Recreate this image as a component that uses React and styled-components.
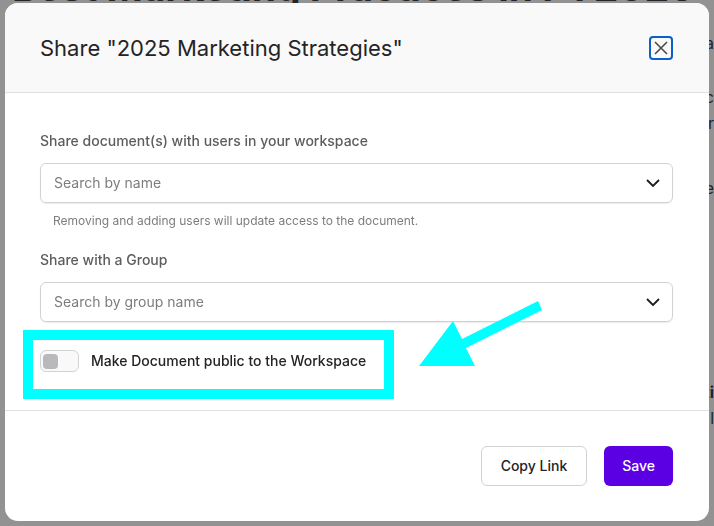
import React, { useState } from "react";
import styled, { createGlobalStyle } from "styled-components";

const cyan = "#00ffff";
const borderColor = "#d2d2d4";

const GlobalStyle = createGlobalStyle`
  * {
    box-sizing: border-box;
  }

  body {
    margin: 0;
    overflow: hidden;
    background: #929292;
    color: #242426;
    font-family: Inter, "Liberation Sans", sans-serif;
    font-size: 14px;
    line-height: 20px;
    -webkit-font-smoothing: antialiased;
  }

  button,
  input {
    font: inherit;
  }
`;

/* the document under the dialog, scrolled part of the way down */
const Page = styled.div`
  height: 100vh;
  overflow: hidden;
`;

const PageTitle = styled.h1`
  margin: -43px 0 0;
  padding-left: 12px;
  font-size: 39px;
  line-height: 60px;
  font-weight: 700;
  white-space: nowrap;
`;

const PageText = styled.p`
  display: flex;
  justify-content: flex-end;
  margin: ${({ $space }) => $space}px 0 0;
  font-size: 16px;
  line-height: 26px;
  font-weight: ${({ $bold }) => ($bold ? 700 : 400)};
`;

const Overlay = styled.div`
  position: fixed;
  inset: 0;
  padding: 3px 5px 5px;
`;

const Modal = styled.div`
  overflow: hidden;
  background: #ffffff;
  border-radius: 13px;
`;

const Header = styled.header`
  display: flex;
  align-items: center;
  justify-content: space-between;
  height: 90px;
  padding: 0 36px 0 35px;
  background: #f9f9f9;
  border-bottom: 1px solid #e0e0e0;
`;

const Title = styled.h2`
  margin: 0;
  font-size: 22px;
  line-height: 28px;
  font-weight: 400;
`;

const CloseButton = styled.button`
  display: flex;
  align-items: center;
  justify-content: center;
  width: 24px;
  height: 24px;
  padding: 0;
  background: transparent;
  border: 2px solid #0a5fcb;
  border-radius: 4px;
  color: #4b4b4d;
`;

const Body = styled.div`
  position: relative;
  padding: 38px 36px 38px 35px;
`;

const Field = styled.div`
  margin-bottom: ${({ $space }) => $space}px;
`;

const Label = styled.label`
  display: block;
  margin-bottom: 12px;
  color: #5d5d5f;
  font-weight: 500;
`;

const SearchBox = styled.div`
  display: flex;
  align-items: center;
  height: 40px;
  padding: 0 12px 0 13px;
  border: 1px solid ${borderColor};
  border-radius: 6px;
  box-shadow: 0 1px 1px rgba(0, 0, 0, 0.08);
`;

const SearchInput = styled.input`
  flex: 1;
  min-width: 0;
  padding: 0;
  border: 0;
  outline: 0;
  background: transparent;

  &::placeholder {
    color: #7d7d80;
    opacity: 1;
  }
`;

const Hint = styled.p`
  margin: 10px 0 0 13px;
  color: #7d7d80;
  font-size: 12px;
  line-height: 16px;
`;

const ToggleRow = styled.label`
  position: relative;
  display: inline-flex;
  align-items: center;
  gap: 12px;
  height: 22px;
  font-weight: 500;
  vertical-align: top;
`;

const Toggle = styled.input`
  appearance: none;
  display: flex;
  align-items: center;
  width: 39px;
  height: 22px;
  margin: 0;
  padding: 0 2px;
  background: #f9f9f9;
  border: 1px solid ${borderColor};
  border-radius: 6px;

  &::before {
    content: "";
    width: 15px;
    height: 15px;
    background: #b9b9bb;
    border-radius: 4px;
  }

  &:checked {
    justify-content: flex-end;
  }
`;

const Highlight = styled.span`
  position: absolute;
  inset: -20px -28px -27px -17px;
  border: 10px solid ${cyan};
  pointer-events: none;
`;

const Arrow = styled.svg`
  position: absolute;
  top: 208px;
  left: 414px;
  pointer-events: none;
`;

const Footer = styled.footer`
  display: flex;
  justify-content: flex-end;
  gap: 17px;
  padding: 35px 36px 35px 35px;
  border-top: 1px solid #e0e0e0;
`;

const Button = styled.button`
  height: 40px;
  padding: 0 ${({ $primary }) => ($primary ? 18 : 19)}px;
  background: ${({ $primary }) => ($primary ? "#5b00e3" : "#ffffff")};
  border: ${({ $primary }) => ($primary ? "0" : `1px solid ${borderColor}`)};
  border-radius: 6px;
  color: ${({ $primary }) => ($primary ? "#ffffff" : "#242426")};
  font-weight: 500;
`;

const Chevron = () => (
  <svg width="14" height="10" viewBox="0 0 14 10" fill="none">
    <path d="M1 2L7 8L13 2" stroke="#1c1c1e" strokeWidth="1.8" />
  </svg>
);

const SearchField = ({ id, label, placeholder, hint, space }) => (
  <Field $space={space}>
    <Label htmlFor={id}>{label}</Label>
    <SearchBox>
      <SearchInput id={id} type="text" placeholder={placeholder} />
      <Chevron />
    </SearchBox>
    {hint && <Hint>{hint}</Hint>}
  </Field>
);

const App = () => {
  const [isPublic, setIsPublic] = useState(false);

  return (
    <>
      <GlobalStyle />
      <Page aria-hidden="true">
        <PageTitle>Best Marketing Practices in FY2026</PageTitle>
        <PageText $space={13}>a</PageText>
        <PageText $space={28}>c</PageText>
        <PageText $space={0}>r</PageText>
        <PageText $space={39}>e</PageText>
        <PageText $space={178} $bold>
          ti
        </PageText>
        <PageText $space={0}>l</PageText>
      </Page>
      <Overlay>
        <Modal role="dialog" aria-labelledby="share-title">
          <Header>
            <Title id="share-title">Share "2025 Marketing Strategies"</Title>
            <CloseButton type="button" aria-label="Close">
              <svg width="14" height="14" viewBox="0 0 14 14" fill="none">
                <path
                  d="M1 1L13 13M13 1L1 13"
                  stroke="currentColor"
                  strokeWidth="1.6"
                />
              </svg>
            </CloseButton>
          </Header>
          <Body>
            <SearchField
              id="users"
              label="Share document(s) with users in your workspace"
              placeholder="Search by name"
              hint="Removing and adding users will update access to the document."
              space={21}
            />
            <SearchField
              id="groups"
              label="Share with a Group"
              placeholder="Search by group name"
              space={28}
            />
            <ToggleRow>
              <Toggle
                type="checkbox"
                checked={isPublic}
                onChange={(e) => setIsPublic(e.target.checked)}
              />
              Make Document public to the Workspace
              <Highlight />
            </ToggleRow>
            <Arrow width="124" height="66" viewBox="0 0 124 66" fill={cyan}>
              <path d="M0 65L34 20L43 38L119 0L123 9L47 47L56 65Z" />
            </Arrow>
          </Body>
          <Footer>
            <Button type="button">Copy Link</Button>
            <Button type="button" $primary>
              Save
            </Button>
          </Footer>
        </Modal>
      </Overlay>
    </>
  );
};

export default App;
